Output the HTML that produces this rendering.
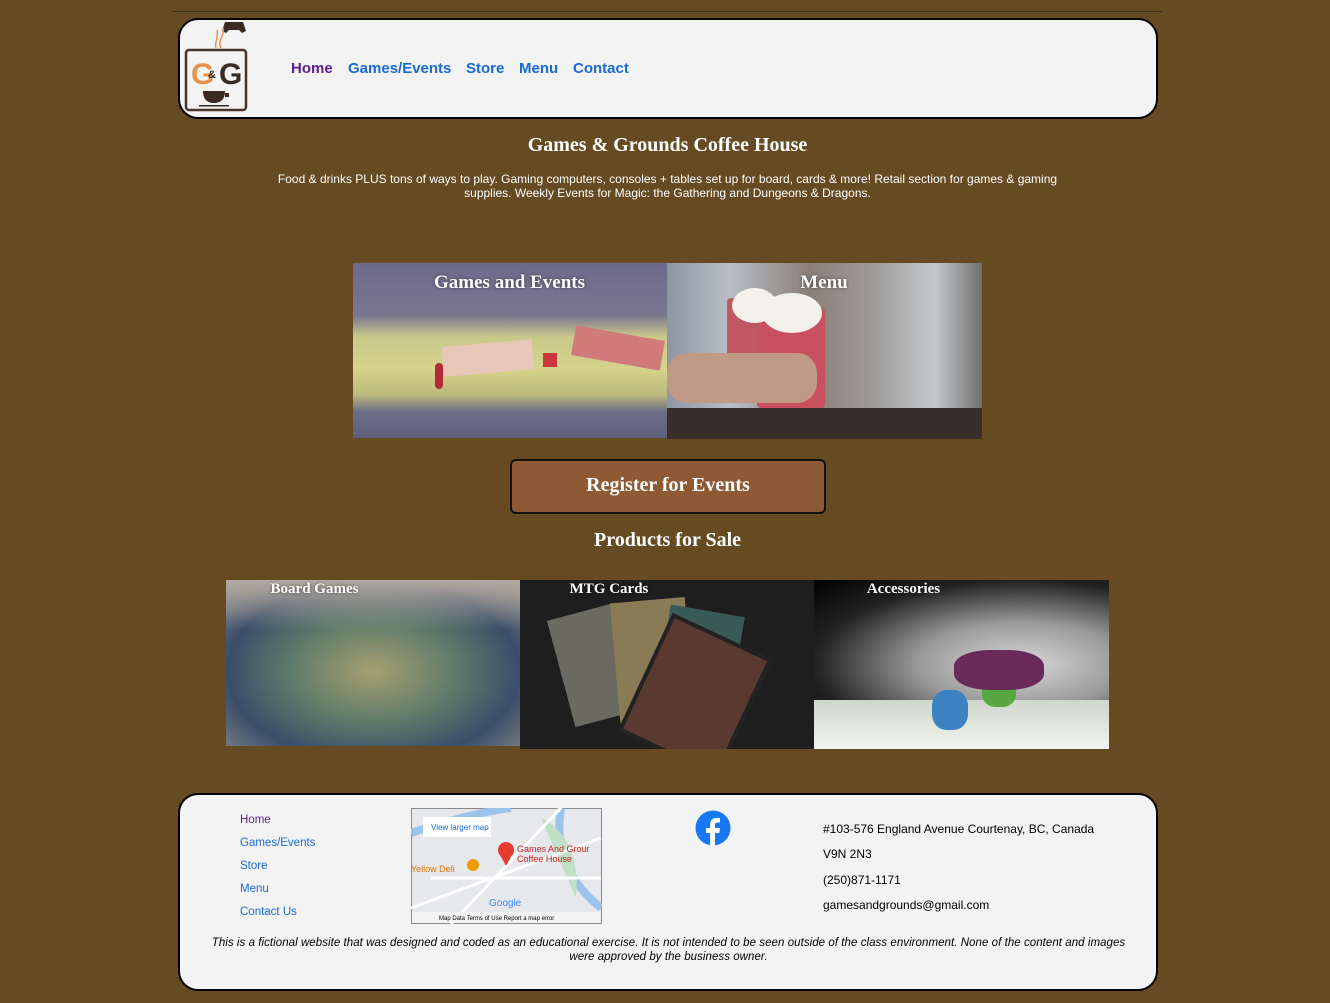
<!DOCTYPE html>
<html><head><meta charset="utf-8"><style>
*{margin:0;padding:0;box-sizing:border-box}
body{width:1330px;height:1003px;background:#654a22;font-family:"Liberation Sans",sans-serif;position:relative;overflow:hidden}
.abs{position:absolute}
.serif{font-family:"Liberation Serif",serif;font-weight:bold;color:#fff}
.box{background:#f3f3f3;border:2px solid #000;border-radius:20px}
nav a{position:absolute;top:60px;font-size:15px;font-weight:bold;color:#1a6bd0;text-decoration:none}
.tile{position:absolute;overflow:hidden}
.tile .t{position:absolute;left:0;right:0;text-align:center;font-family:"Liberation Serif",serif;font-weight:bold;color:#fff;text-shadow:0 0 3px rgba(0,0,0,.5)}
.fl a{position:absolute;left:240px;font-size:11.5px;color:#1a6bd0;text-decoration:none}
.ad{position:absolute;left:823px;font-size:12px;color:#000}
</style></head><body>
<div class="abs" style="left:172px;top:11px;width:990px;height:1px;background:#3a2c18"></div>
<div class="abs box" style="left:178px;top:18px;width:980px;height:101px"></div>
<svg class="abs" style="left:183px;top:18px" width="66" height="94" viewBox="0 0 66 94">
<rect x="3" y="32" width="60" height="60" rx="3" fill="none" stroke="#4a3428" stroke-width="2.5"/>
<path d="M42 4h18l3 9-4 2-3-3h-10l-3 3-4-2z" fill="#3b2a22"/>
<path d="M38 30c-4-8 4-12 2-20M33 30c-2-6 3-10 1-18" stroke="#e8924a" stroke-width="1.5" fill="none"/>
<text x="8" y="66" font-family="Liberation Sans" font-weight="bold" font-size="30" fill="#e8924a">G</text>
<text x="25" y="60" font-family="Liberation Sans" font-weight="bold" font-size="11" fill="#3b2a22">&amp;</text>
<text x="36" y="66" font-family="Liberation Sans" font-weight="bold" font-size="30" fill="#3b2a22">G</text>
<path d="M20 73h22c0 9-5 12-11 12s-11-3-11-12zM42 75h4v4h-4" fill="#3b2a22"/>
<rect x="16" y="87" width="30" height="1.5" fill="#3b2a22"/>
</svg>
<nav><a style="left:291px;color:#5b1d8e">Home</a><a style="left:348px">Games/Events</a><a style="left:466px">Store</a><a style="left:519px">Menu</a><a style="left:573px">Contact</a></nav>
<div class="abs serif" style="left:0;width:1335px;top:134px;text-align:center;font-size:20px">Games &amp; Grounds Coffee House</div>
<div class="abs" style="left:270px;width:795px;top:172px;text-align:center;font-size:12px;color:#fff;line-height:14px">Food &amp; drinks PLUS tons of ways to play. Gaming computers, consoles + tables set up for board, cards &amp; more! Retail section for games &amp; gaming supplies. Weekly Events for Magic: the Gathering and Dungeons &amp; Dragons.</div>

<div class="tile" style="left:353px;top:263px;width:314px;height:175px;background:linear-gradient(180deg,#6e6a8a 0%,#7a7690 30%,#c8c88a 42%,#d6d38c 60%,#bdbb7a 75%,#6d6e88 85%,#5d5f7a 100%)">
<div style="position:absolute;left:90px;top:80px;width:90px;height:30px;background:#e9c7b8;transform:rotate(-5deg)"></div>
<div style="position:absolute;left:220px;top:70px;width:90px;height:30px;background:#d07a7a;transform:rotate(10deg)"></div>
<div style="position:absolute;left:190px;top:90px;width:14px;height:14px;background:#c83a3a"></div>
<div style="position:absolute;left:82px;top:100px;width:8px;height:26px;background:#b52a3a;border-radius:4px"></div>
<div class="t" style="top:9px;font-size:19px;left:-1px">Games and Events</div></div>
<div class="tile" style="left:667px;top:263px;width:315px;height:176px;background:linear-gradient(90deg,#8d96a2 0%,#b7bec6 20%,#8c7f78 45%,#9c9a98 65%,#c6c8cc 85%,#707070 100%)">
<div style="position:absolute;left:0;top:145px;width:315px;height:31px;background:#3a2e2a"></div>
<div style="position:absolute;left:60px;top:35px;width:45px;height:70px;background:#c25764;border-radius:4px"></div>
<div style="position:absolute;left:90px;top:45px;width:68px;height:100px;background:#c9505e;border-radius:4px"></div>
<div style="position:absolute;left:95px;top:30px;width:60px;height:40px;background:#f4f0ea;border-radius:50%"></div>
<div style="position:absolute;left:65px;top:25px;width:45px;height:35px;background:#f4f0ea;border-radius:50%"></div>
<div style="position:absolute;left:0;top:90px;width:150px;height:50px;background:#c09a86;border-radius:20px"></div>
<div class="t" style="top:9px;font-size:19px;left:-1px;right:0">Menu</div></div>

<div class="abs" style="left:510px;top:459px;width:316px;height:55px;background:#8f5935;border:2px solid #111;border-radius:6px"></div>
<div class="abs serif" style="left:510px;width:316px;top:474px;text-align:center;font-size:20px">Register for Events</div>
<div class="abs serif" style="left:0;width:1335px;top:529px;text-align:center;font-size:20px">Products for Sale</div>

<div class="tile" style="left:226px;top:580px;width:295px;height:166px;background:radial-gradient(ellipse at 50% 55%,#a6a070 0%,#5e7a6a 40%,#3a4e6a 70%,#8a8a8a 100%)">
<div style="position:absolute;left:0;top:0;width:295px;height:50px;background:linear-gradient(#b3aaa0,rgba(150,140,130,0))"></div>
<div class="t" style="top:1px;left:-118px;font-size:15px">Board Games</div></div>
<div class="tile" style="left:520px;top:580px;width:294px;height:169px;background:#1e1e1e">
<div style="position:absolute;left:40px;top:30px;width:70px;height:110px;background:#6b6a60;transform:rotate(-15deg)"></div>
<div style="position:absolute;left:95px;top:20px;width:75px;height:120px;background:#8a7a55;transform:rotate(-5deg)"></div>
<div style="position:absolute;left:140px;top:30px;width:75px;height:120px;background:#3a5a56;transform:rotate(10deg)"></div>
<div style="position:absolute;left:120px;top:50px;width:110px;height:130px;background:#5a3a30;border:4px solid #222;transform:rotate(25deg)"></div>
<div class="t" style="top:1px;left:-116px;font-size:15px">MTG Cards</div></div>
<div class="tile" style="left:814px;top:580px;width:295px;height:169px;background:radial-gradient(ellipse at 70% 50%,#d8d8d8 0%,#9a9a9a 35%,#222 70%,#000 100%)">
<div style="position:absolute;left:0;top:120px;width:295px;height:49px;background:linear-gradient(#cfd6cc,#f0f4ee)"></div>
<div style="position:absolute;left:118px;top:110px;width:36px;height:40px;background:#3a82c0;border-radius:40%"></div>
<div style="position:absolute;left:168px;top:95px;width:34px;height:32px;background:#58a840;border-radius:40%"></div>
<div style="position:absolute;left:140px;top:70px;width:90px;height:40px;background:#6a2a5a;border-radius:40%"></div>
<div class="t" style="top:1px;left:-116px;font-size:15px">Accessories</div></div>

<div class="abs box" style="left:178px;top:793px;width:980px;height:198px"></div>
<div class="fl"><a style="top:814px;color:#5b1d8e">Home</a><a style="top:837px">Games/Events</a><a style="top:860px">Store</a><a style="top:883px">Menu</a><a style="top:906px">Contact Us</a></div>
<svg class="abs" style="left:411px;top:808px" width="191" height="116" viewBox="0 0 191 116">
<rect x="0.5" y="0.5" width="190" height="115" fill="#e6e8ec" stroke="#888"/>
<path d="M0 25 Q60 5 100 0" stroke="#9cc4ea" stroke-width="8" fill="none"/>
<path d="M150 0 Q140 60 190 100" stroke="#9cc4ea" stroke-width="8" fill="none"/>
<path d="M130 10 Q170 30 165 90" fill="#bfe0c4"/>
<path d="M0 100 L190 30 M40 116 L150 0 M20 70 L190 70" stroke="#fff" stroke-width="3"/>
<rect x="12" y="9" width="68" height="20" fill="#fff"/>
<text x="20" y="22" font-family="Liberation Sans" font-size="8" fill="#1a6bd0">View larger map</text>
<circle cx="95" cy="42" r="8" fill="#e53b30"/><path d="M88 45 L95 58 L102 45z" fill="#e53b30"/>
<text x="106" y="44" font-family="Liberation Sans" font-size="9" fill="#c5221f">Games And Grour</text>
<text x="106" y="54" font-family="Liberation Sans" font-size="9" fill="#c5221f">Coffee House</text>
<text x="0" y="64" font-family="Liberation Sans" font-size="9" fill="#e37400">Yellow Deli</text>
<circle cx="62" cy="57" r="6" fill="#f29900"/>
<text x="78" y="98" font-family="Liberation Sans" font-size="10" fill="#4285f4">Google</text>
<rect x="1" y="104" width="189" height="11" fill="#f3f3f3"/>
<text x="28" y="112" font-family="Liberation Sans" font-size="6" fill="#000">Map Data    Terms of Use    Report a map error</text>
</svg>
<svg class="abs" style="left:695px;top:810px" width="36" height="36" viewBox="0 0 36 36">
<circle cx="18" cy="18" r="17.5" fill="#1877f2"/>
<path d="M20 36V23h4.3l.7-5H20v-3c0-1.5.5-2.5 2.6-2.5H25V8.2c-.5-.1-2-.2-3.7-.2-3.7 0-6.2 2.2-6.2 6.3V18h-4v5h4v13z" fill="#fff"/>
</svg>
<div class="ad" style="top:822px">#103-576 England Avenue Courtenay, BC, Canada</div>
<div class="ad" style="top:847px">V9N 2N3</div>
<div class="ad" style="top:873px">(250)871-1171</div>
<div class="ad" style="top:898px">gamesandgrounds@gmail.com</div>
<div class="abs" style="left:196px;width:945px;top:936px;text-align:center;font-size:11.5px;font-style:italic;color:#000;line-height:14px;letter-spacing:0.05px">This is a fictional website that was designed and coded as an educational exercise. It is not intended to be seen outside of the class environment. None of the content and images<br>were approved by the business owner.</div>
</body></html>
